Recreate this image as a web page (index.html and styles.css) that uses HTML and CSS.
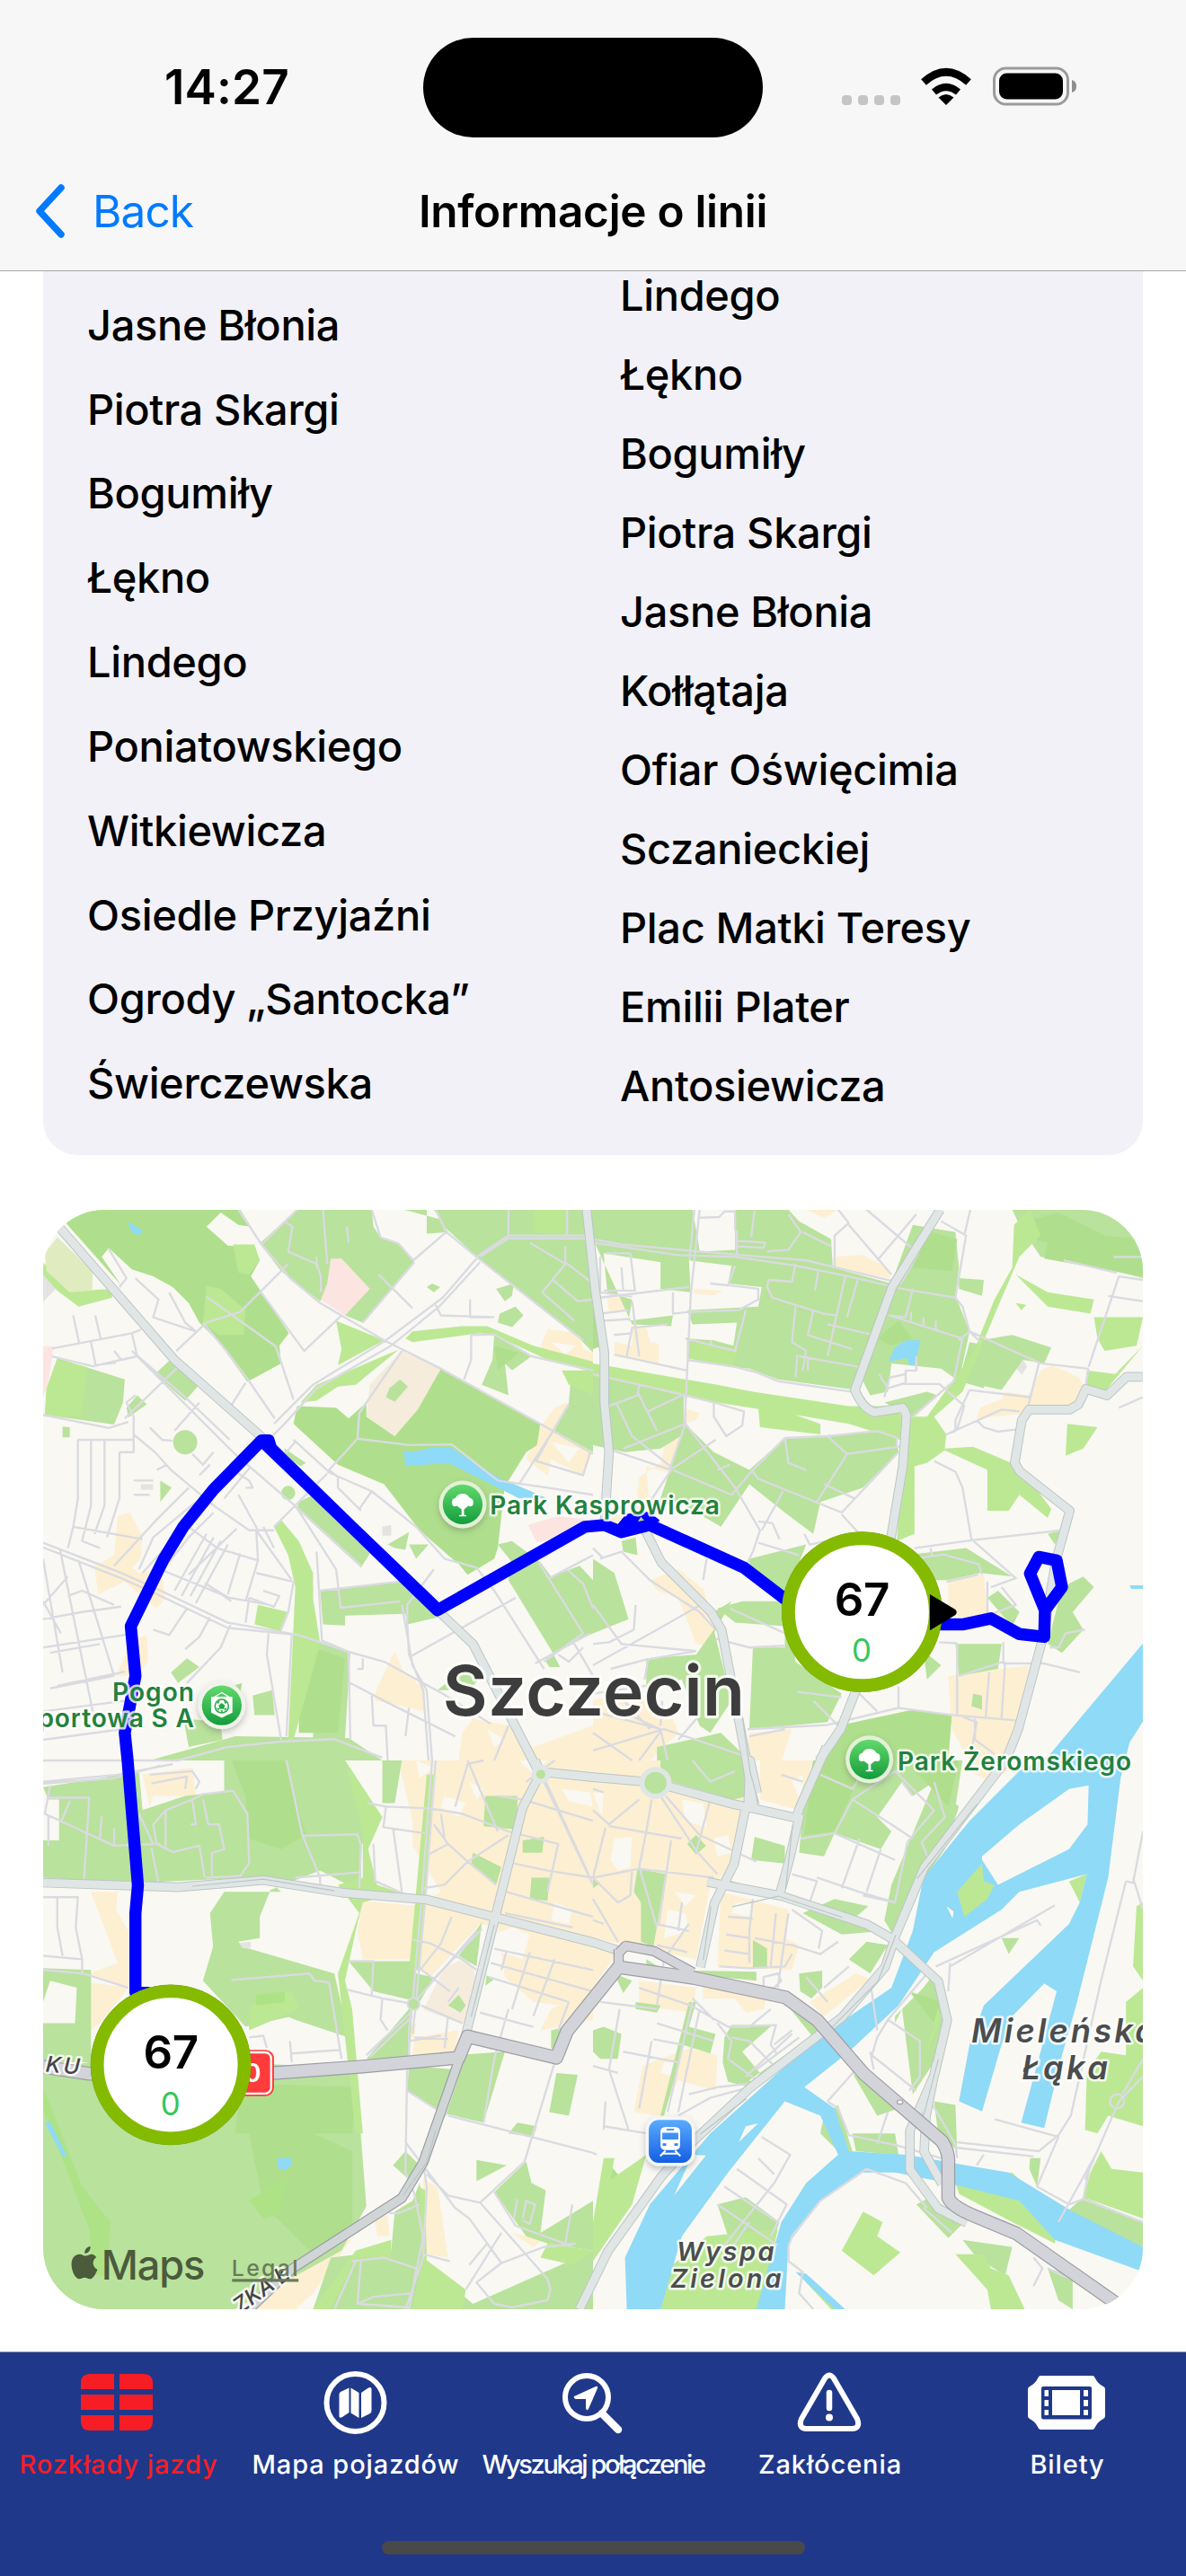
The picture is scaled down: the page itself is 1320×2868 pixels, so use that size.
FILE: index.html
```html
<!DOCTYPE html>
<html lang="pl">
<head>
<meta charset="utf-8">
<title>Informacje o linii</title>
<link rel="stylesheet" href="styles.css">
</head>
<body>
<div class="screen">
<header class="header">
  <div class="status">
    <div class="status-left"><span class="time">14:27</span></div>
    <div class="island"></div>
    <div class="status-right">
      <svg class="status-icons" viewBox="0 0 264 46" width="264" height="46">
        <g fill="#c5c5c6"><rect x="0" y="32" width="11" height="11" rx="4"/><rect x="18" y="32" width="11" height="11" rx="4"/><rect x="36" y="32" width="11" height="11" rx="4"/><rect x="54" y="32" width="11" height="11" rx="4"/></g>
        <path d="M116 43L107.500 34.500Q116 27.500 124.500 34.500Z"/>
        <path d="M102.500 28.500Q116 17.500 129.500 28.500" fill="none" stroke="#000" stroke-width="8"/>
        <path d="M91 17.500Q116-5 141 17.500" fill="none" stroke="#000" stroke-width="8.500"/>
        <rect x="169.500" y="2" width="82" height="40" rx="13" fill="none" stroke="#9b9b9b" stroke-width="3"/>
        <rect x="175" y="7.500" width="71" height="29" rx="8.500"/>
        <path d="M256 15q5 1.500 5 7t-5 7z" fill="#8f8f8f"/>
      </svg>
    </div>
  </div>
  <nav class="navbar">
    <a class="back"><svg viewBox="0 0 36 60" width="36" height="60"><path d="M30 4L6 30L30 56" fill="none" stroke="#007aff" stroke-width="7.500" stroke-linecap="round" stroke-linejoin="round"/></svg><span>Back</span></a>
    <h1 class="title">Informacje o linii</h1>
  </nav>
</header>
<main class="content">
  <section class="stops">
    <ul class="stop-list outbound">
      <li>Jasne Błonia</li><li>Piotra Skargi</li><li>Bogumiły</li><li>Łękno</li><li>Lindego</li><li>Poniatowskiego</li><li>Witkiewicza</li><li>Osiedle Przyjaźni</li><li>Ogrody „Santocka”</li><li>Świerczewska</li>
    </ul>
    <ul class="stop-list inbound">
      <li>Lindego</li><li>Łękno</li><li>Bogumiły</li><li>Piotra Skargi</li><li>Jasne Błonia</li><li>Kołłątaja</li><li>Ofiar Oświęcimia</li><li>Sczanieckiej</li><li>Plac Matki Teresy</li><li>Emilii Plater</li><li>Antosiewicza</li>
    </ul>
  </section>
  <section class="map">
  <svg viewBox="20.2 17.7 3095.500 3095.500" width="1224" height="1224">
    <defs>
      <linearGradient id="poi" x1="0" y1="0" x2="0" y2="1"><stop offset="0" stop-color="#62d96c"/><stop offset="1" stop-color="#139c3c"/></linearGradient>
      <linearGradient id="rail" x1="0" y1="0" x2="0" y2="1"><stop offset="0" stop-color="#5aabff"/><stop offset="1" stop-color="#155ee3"/></linearGradient>
      <filter id="shadow" x="-50%" y="-50%" width="200%" height="200%"><feDropShadow dx="0" dy="8" stdDeviation="10" flood-color="#555" flood-opacity=".35"/></filter>
      <g id="tree"><circle r="67" fill="#e3f1d7" filter="url(#shadow)"/><circle r="56" fill="url(#poi)"/><path fill="#fff" d="M-3 30V14L-16 4Q-30 10-30-6Q-30-16-20-18Q-14-30 0-30Q14-30 20-18Q30-16 30-6Q30 10 16 4L4 14V30H10V34H-10V30Z"/></g>
    </defs>
    <rect width="3140" height="3140" fill="#f9f8f3"/>

    <!-- built-up areas -->
    <g class="town">
      <path d="M230 880L265 870L300 940L295 1000L260 1035L218 1015ZM165 1020L220 990L290 1040L350 1030L365 1110L340 1140L250 1065L175 1100ZM1420 400L1440 355L1535 365L1540 410L1568 420V450L1430 415ZM1460 575L1495 560L1490 620L1568 700L1540 765L1450 720L1440 765L1380 720L1420 630ZM270 1230L312 1215L315 1290L280 1330L225 1330ZM955 1375L1010 1260L1030 1310L1095 1370V1430L1010 1410L955 1400ZM1230 1450L1330 1470L1400 1530L1568 1470V1568H1190L1200 1490Z"/>
      <g transform="translate(1568 0)"><path d="M600 17H690L650 40ZM190 165H270V240L190 235ZM280 240L365 245L340 258L290 255ZM40 265L95 262L98 300L45 305ZM110 345H150L160 390L185 395V450L60 430L60 390L110 400ZM680 150L760 145L835 185V210L675 180ZM760 335L795 355L775 415L755 415ZM1260 470L1290 455L1370 490L1385 530L1350 570L1220 590L1080 605L1090 575L1150 550L1160 530L1225 540ZM255 575L300 590L290 610L255 620ZM210 650L255 620L220 760L150 740L160 870L90 930L30 915L60 880L120 860L130 770L190 730ZM160 1060L240 1030L310 1085L345 1200L340 1250L290 1240L240 1110L180 1090ZM1000 1065L1100 1045L1110 1160L1180 1130L1180 1180L1000 1160ZM1000 1330L1230 1300L1180 1500L1150 1568H1060L1010 1480ZM0 1400L100 1370L220 1440L240 1490L160 1568H0ZM440 1490L560 1480L530 1568H430Z"/></g>
      <g transform="translate(0 1568)"><path d="M300 40L440 20L450 100L330 100L320 130ZM155 370H230L225 420L260 480V640L150 600L230 570ZM155 625L260 640L180 740L155 760ZM920 395L1080 410L1060 560H920L905 480ZM1020 0H1360L1400 40L1440 0H1568V700L1400 680L1320 610L1300 470L1250 460L1110 610L1080 590L1090 400L1140 370L1060 240L1060 170ZM940 830L1070 740L1060 830L1180 820L1190 760L1060 780ZM1450 700L1568 650V730L1420 760ZM1090 1180L1130 1200L1160 1400L1100 1390ZM955 1290L990 1280L995 1340L960 1340ZM620 1480L890 1345L780 1500L730 1545H600ZM1340 1330L1425 1350L1400 1370Z"/></g>
      <g transform="translate(1568 1568)"><path d="M0 0H440L400 300L330 350L290 560L0 500ZM360 370L550 420L540 500L580 520L560 590L350 580ZM130 620L290 640L280 710L130 690ZM310 610L490 660L480 700L430 710L400 670L310 670ZM610 680L740 600L780 615L650 720ZM140 860L270 810L350 830L345 930L240 900L190 1000L115 990ZM470 0H620L580 140L470 110ZM1040 20L1120 60L1180 20V0H1060ZM0 530H75L0 640Z"/></g>
    </g>
    <g class="land-gap"><path d="M1450 390L1520 400L1490 425ZM1450 670L1530 690L1500 730ZM1270 1480L1320 1510L1290 1530Z"/>
      <g transform="translate(0 1568)"><path d="M1150 100L1210 120L1190 160L1140 130ZM1340 470L1390 490L1370 560L1310 540L1290 580L1290 490ZM1460 400L1510 420L1500 460L1450 450ZM1480 80L1560 90L1568 130L1500 115ZM1130 720L1180 740L1170 760L1120 755ZM1070 0L1120 20L1080 50ZM1220 60L1260 80L1240 110Z"/></g>
      <g transform="translate(1568 1568)"><path d="M60 220L110 215L105 300L70 310L50 280ZM250 110L310 120L320 190L260 170ZM340 220L380 210L390 260L350 270ZM0 90L30 90L25 160ZM210 420L260 430L270 480L200 500ZM230 370L290 380L260 410ZM400 400L450 400L440 440L390 430ZM200 850L240 850L230 890L190 880ZM560 60L590 40V130Z"/></g>
    </g>
    <g fill="#fce4e1"><path d="M830 152L855 152L942 240L870 315L800 270L820 225ZM20 402H50L35 500L20 545ZM1385 905L1470 880L1555 890L1500 930L1410 955Z"/></g>
    <path fill="#f6ecde" d="M1030 415L1140 465L1075 580L1010 655L930 600L940 510ZM1215 2122L1240 2180L1205 2310L1090 2270L1150 2150ZM548 2000L565 2005V2055H548ZM1730 1295H1765L1758 1308H1735Z"/>
    <path fill="#e3e4e2" d="M20 195L60 235L20 278ZM2035 310L2075 318L2060 328ZM1985 345L2030 350L2020 365ZM2755 460L2780 440L2790 460L2775 482ZM2640 1245L2675 1248V1285H2645ZM2070 1350L2095 1360L2080 1380ZM545 2085L605 2078V2095L560 2105ZM295 790H330V806H295ZM975 910L1000 905V935H975Z"/>

    <!-- light parkland -->
    <g fill="#b9e29c">
      <path d="M630 112L735 17L945 17L950 65L970 95L1020 110L1065 165L920 335L870 315L940 240L860 155L830 155L820 225L800 275L690 190ZM1035 17H1100V85L1160 80L1140 45ZM1120 17H1568V420L1525 375L1320 215L1240 150L1155 70ZM60 435L250 495L245 560L220 622L25 595L30 520ZM380 438L455 515L420 555L335 480ZM255 575L285 540L312 565L260 602ZM386 672A34 34 0 1 0 454 672A34 34 0 1 0 386 672ZM1100 235L1115 225L1138 235L1120 250ZM1295 240L1345 225L1340 260L1320 275ZM1305 310L1350 290L1372 315L1340 348L1300 335ZM1290 370L1395 430L1340 470L1320 450L1330 540L1255 510L1285 440ZM1500 560L1505 500L1568 460V700L1460 640ZM700 690L760 730L745 740L700 710ZM800 1090L1040 1060L1130 1165L1045 1185L1040 1155L870 1160V1188L808 1185ZM990 960L1050 925L1040 975L1010 970ZM1050 960L1105 960L1070 1000ZM740 840L780 820L940 985L915 1025L735 860ZM1300 960L1340 950L1420 1010L1450 1050L1530 1020L1568 1060V1210L1455 1265L1330 1060L1340 1010ZM1435 1290L1455 1265L1475 1305H1445ZM780 1230L885 1265L870 1505H780ZM380 1320L425 1280L460 1305L400 1350ZM610 1385L665 1370L672 1440L615 1440ZM350 780L382 800L350 840ZM75 628L95 630V658H75ZM690 815A20 20 0 1 1 730 815A20 20 0 1 1 690 815ZM415 1450L520 1460L525 1510L430 1530ZM1180 1330L1280 1300L1220 1370L1130 1370ZM320 1568L560 1500L880 1505L975 1568Z"/>
      <g transform="translate(1568 0)"><path d="M0 17H280L295 100L300 135L400 130V17H550L580 50L670 100L675 180L840 225L820 320L740 525L520 495L440 465L390 460L265 435V380L340 385L395 400L405 335L280 340L265 300L465 290L475 235L380 225L390 175L270 160L275 250L190 240V165L60 145L30 140L40 250L110 270L100 330L225 315L220 345L110 340L0 100ZM840 225L900 60L1020 80L1030 180L1020 260L1060 360L1030 500L980 465L840 450L830 530L780 540L755 490ZM1030 210L1100 215L1095 260L1030 240ZM1180 17H1548V210L1470 190L1260 150L1200 60ZM1090 385L1180 370L1290 405L1270 450L1210 440L1150 525L1040 500ZM1060 390L1110 400L1100 520L1030 500ZM0 480L130 510L255 540V650L190 690L90 700L0 680ZM260 620L340 700L440 750L540 660L850 640L860 700L760 800L640 840L620 930L540 870L440 790L360 910L240 840L180 860ZM440 1000L600 960L540 1110L440 1030ZM0 1000L60 1040L100 1170L0 1210ZM350 1140L420 1120L540 1120L570 1290L700 1380L660 1460L440 1480L450 1250L540 1250L540 1190L400 1180ZM880 990L1050 970L1180 1050L1090 1040L1000 1060L900 1060ZM1320 1080L1380 1050L1410 1080L1350 1150L1380 1200L1320 1265L1280 1240ZM1020 1240L1150 1240L1140 1310L1030 1330ZM1070 1380L1095 1385V1425L1065 1415ZM1110 1110L1140 1090L1200 1150L1180 1190ZM150 1280L290 1270L340 1200L390 1400L330 1490L300 1470L250 1340L150 1370ZM180 1530L360 1490L440 1568H180ZM80 950L120 940L125 990L85 980ZM820 560L940 530L970 540L900 600ZM930 1260L980 1300L940 1340ZM340 1150L390 1120L340 1210ZM1280 930L1320 920L1300 960Z"/></g>
      <g transform="translate(0 1568)"><path d="M20 75L180 50L290 30L300 140L420 100L550 85L600 110V330L270 345L20 330V225H65V110L35 110ZM20 585L155 590V850H20V740L110 740L115 640L40 620L20 680ZM150 850H580L900 870L930 1255L860 1380L560 1545H20V870ZM530 90V0H870L975 160L960 180L915 240V370L800 310L660 365L630 440V500L570 510L600 560L600 630L840 600L860 690L880 780L730 730L470 620L500 540L490 430L530 370H690L650 330H600ZM600 530L840 600L830 700L720 720L590 750L470 620L500 520ZM975 0H1030L1010 120H975ZM1265 100L1355 100V195L1260 185ZM1370 225L1430 215L1425 260L1370 260ZM1230 260L1310 300L1295 350L1225 290ZM1395 330L1445 330L1440 395L1390 390ZM1320 820L1260 1020L1155 995L1190 890L1180 830ZM1050 860L1180 870L1140 990L1045 930ZM1465 880L1525 885L1500 1000L1445 990ZM1330 1050L1355 1020L1410 1030L1400 1060ZM1240 1125L1325 1140L1240 1185ZM1290 1215L1380 1130L1395 1190L1435 1210L1420 1330L1568 1240V1545H1090L1100 1420L1230 1530L1568 1380L1440 1360L1380 1340ZM1005 1140L1040 1100L1075 1135L1050 1180ZM1080 1190L1100 1400L1060 1545H780L830 1400L1000 1380L1010 1270L1060 1240ZM1080 585L1060 700L1050 850L930 840L1050 700ZM880 565H1070V600L1120 610L1080 680L950 650ZM1255 455L1240 580L1190 550ZM1160 690L1190 660L1210 690L1195 710ZM980 820L1040 795L1030 825ZM1268 605L1290 615L1265 635ZM1450 760L1490 750V830L1450 810Z"/></g>
      <g transform="translate(1568 1568)"><path d="M190 0H430L440 100L395 110L220 60L190 30ZM620 0H1040L1020 130L960 60L900 100L870 60L800 160L840 200L810 250L680 205L650 270L580 260L590 150ZM960 60L1030 130L990 250L900 380L850 500L820 450L840 350L890 230ZM125 305L205 320L170 525L135 510V400L115 370ZM455 215L540 240V290L445 280ZM265 235L290 210L318 240L290 265ZM360 330L520 380L530 390L390 360ZM590 430L680 390L775 410L740 440L820 480L700 490ZM450 505L490 530V585H450ZM720 560L770 510L830 520L780 600ZM580 600L645 592V640L615 670L583 650ZM150 560L200 590L460 595V620L150 590ZM60 600L110 620L85 655ZM120 680L190 690L180 710L120 700ZM370 780L390 745L505 745L420 820L470 880L440 920L380 905L365 850ZM270 750L345 770L330 825L250 800ZM270 680H290L200 1000H190ZM0 760L30 750L80 770L70 840L20 840L0 820ZM540 680L650 740L620 780ZM640 760L440 900L460 920L650 780ZM650 1000L690 970L730 1100L700 1110L640 1050ZM730 1050L850 1050L860 1110L740 1100ZM850 720L930 640L960 600L990 700L960 850L900 940L870 700L850 740ZM960 960L1020 970L1025 1100L970 1040ZM350 1250L430 1230L525 1300L500 1370L400 1400ZM910 1250L950 1230L1050 1295L1000 1345ZM1340 1265L1380 1230L1548 1300V1370L1360 1290ZM1230 1120L1260 1120L1250 1200L1228 1150ZM1040 1350L1180 1370L1160 1450L1080 1400ZM1280 1430L1350 1450L1350 1545L1310 1520ZM1150 500H1200L1170 545ZM730 880L860 980L800 1000ZM0 330L20 345L0 360Z"/></g>
    </g>

    <!-- woodland -->
    <g fill="#afdf8c">
      <path d="M80 50L150 17L575 17L605 65L570 60L520 25L480 65L540 118L615 125L630 160L605 205L712 365L685 400L690 450L595 502L515 390L460 335L430 280L385 235L330 205L270 185L205 125L185 150L240 230ZM735 570L845 575L880 605L930 560V600L1010 655L1140 465L1420 620L1410 680L1380 700L1330 780L1320 790L1300 970L1290 1000L1215 1045L1190 1015L1160 990L1080 920L980 790L850 735L725 620ZM1290 400L1360 420L1300 470ZM745 1000L780 1080L775 1220L740 1210ZM520 1370L580 1350L570 1400ZM780 1250L870 1280L850 1490L740 1490V1300Z"/>
      <g transform="translate(1568 0)"><path d="M920 110L950 80L1025 100L1010 190L900 180ZM1215 50L1310 25L1440 90L1548 100V205L1270 155L1280 110L1215 95ZM860 330L900 380L840 400L800 380ZM0 230L25 400L0 410ZM690 1470L900 1425L1010 1440L1000 1568H640Z"/></g>
      <g transform="translate(0 1568)"><path d="M550 0H700L760 210L690 250L600 220L590 100ZM600 1050H780L890 1100V1300L780 1390L640 1250ZM580 910L900 920L890 1050L560 1050Z"/></g>
      <g transform="translate(1568 1568)"><path d="M620 0H770L720 110L680 200L595 210ZM880 0H1030L1000 130ZM890 650L980 680L960 740ZM0 1300L100 1200L40 1130L30 1300ZM230 1460L430 1390L450 1545H330Z"/></g>
    </g>
    <path fill="#f5ecdc" d="M1030 415L1140 465L1075 580L1010 655L930 600L940 510Z"/>
    <path fill="#b9e29c" d="M985 545L995 520L1025 495L1047 515L1010 558Z"/>

    <!-- grass -->
    <g fill="#bce894">
      <path d="M20 165L95 248L210 240L215 265L120 290L60 245L20 200ZM480 230L520 240L590 300L585 370L515 370L470 335ZM555 115H615L630 160L600 200L570 195ZM845 330L980 385L850 455L860 410ZM745 560L790 510L1000 420L1020 412L900 510L850 515L790 555ZM1040 380L1060 360L1200 345L1270 345L1400 400L1568 445V475L1440 440L1300 375L1250 365L1060 390ZM1480 470L1568 470V540L1500 510ZM60 440L145 460L130 600H25L30 520ZM670 910L690 890L740 950L780 1040V1110L800 1240L725 1510H710L730 1080L710 990ZM625 1130L710 1150L690 1205L615 1185ZM1400 17H1495V90L1400 80Z"/>
      <path fill="#e0ebc0" d="M60 95L160 190L158 245L95 250L30 190L25 140Z"/>
      <g transform="translate(1568 0)"><path d="M0 450L260 495L350 510L450 530L720 570L850 570L870 600L880 670L720 620L600 600L350 560L0 485ZM1185 60L1230 17L1260 90L1200 150L1140 290L1040 530L960 600L995 650L990 690L1070 685L1200 740L1290 860L1280 885L1200 820L1170 865H1110V750L990 695L940 730L905 740V930L855 950L880 600L940 600L1070 420L1130 270L1180 180ZM1190 200L1280 250L1410 270L1400 310L1280 290L1230 240ZM1410 320L1548 320L1530 400L1440 415L1420 380ZM1335 620L1420 630L1380 690L1330 710ZM1390 470L1470 480L1548 400L1440 530L1385 520ZM465 575L500 570L640 620L640 650L470 630ZM1190 280L1220 285L1205 300ZM265 390L410 410L390 460L265 435Z"/></g>
      <g transform="translate(0 1568)"><path d="M870 0L975 160L935 250L960 350L1020 370L920 400L900 480L870 620L890 700L920 1050H900L850 600L910 430L850 350L920 330V200ZM600 690L720 650L740 700L600 760ZM900 1380L1000 1350L1000 1400L900 1400L830 1545H780ZM1090 1400L1210 1490L1200 1545H1060ZM1440 1360L1568 1380L1510 1420L1420 1400ZM1100 40H1120L1080 590H1050ZM1080 1200L1095 1210L1100 1400L1085 1400Z"/>
      <path fill="#ade386" d="M20 920L130 1200L210 1300L200 1450L160 1450L150 1320L20 980ZM620 660L700 650L700 680L620 690ZM600 1240L710 1170L680 1280L640 1290Z"/></g>
      <g transform="translate(1568 1568)"><path d="M1025 370L1095 290L1100 340L1130 350L1110 390L1045 440ZM1340 340L1390 320L1370 400ZM1530 410L1548 400V620L1520 580ZM1500 680L1548 640V1030L1450 1000L1420 1050L1385 1040L1390 880L1430 820L1500 830ZM970 700L930 850L980 720ZM700 1380L760 1270L815 1300L800 1340L865 1385L790 1450ZM1020 1390L1100 1390L1120 1430L1170 1450L1215 1545H1120L1110 1490ZM1020 1190L1180 1160L1310 1290L1300 1360L1180 1300L1030 1220ZM0 1300L30 1120H60L50 1180L150 1110L110 1250L0 1410ZM200 1440L320 1340L520 1320L470 1545H190ZM1430 1100L1460 1150L1548 1160V1290L1380 1230L1400 1160ZM560 1400L590 1450L700 1545H670L600 1470Z"/></g>
    </g>

    <!-- water -->
    <g fill="#8fdaf6">
      <path d="M258 50L300 75L290 90L270 80ZM1035 695L1060 700L1110 688L1170 688L1300 770L1440 830H1360L1160 730L1040 740Z"/>
      <g transform="translate(1568 0)"><path d="M832 445L850 405L880 385H922L905 455L890 455L885 435ZM1510 1075H1548V1085H1515Z"/></g>
      <g transform="translate(0 1568)"><path d="M25 1020L40 1018L88 1115L75 1115ZM680 1120H720V1140L700 1155L680 1145Z"/></g>
      <g transform="translate(1568 1568)">
        <path d="M1200 30L1280-10L1548-330V-110L1510-50L1485 50L1450 330L1360 690L1320 830L1270 1035L1205 1020L1260 820L1305 650L1270 628L1180 720L1150 800L1095 988L1030 960L1060 800L1100 690L1340 460L1370 400L1390 320L1200 370L1150 420L960 540L860 690L720 820L595 920L680 980L720 1100L880 1110L1050 1140L1170 1160L1350 1270L1548 1370V1440L1300 1350L1200 1240L1000 1190L850 1160L760 1160L640 1240L550 1360L540 1545H460L530 1300L600 1190L690 1110L640 1000L540 960L380 1160L250 1340L190 1545H95L90 1400L160 1250L330 1050L620 790L840 640L900 480L930 330L1060 170Z"/>
        <path class="land" d="M1395 70L1392 180L1340 250L1140 350L1095 280V270L1200 180L1340 80ZM995 410L1015 425L1012 445ZM410 1075L430 1030L465 1022ZM228 1225L280 1110L318 1112Z"/>
        <path fill="#bce894" d="M1025 370L1095 290L1100 340L1130 350L1110 390L1045 440Z"/>
        <path d="M570 1440L600 1445L710 1545H680L590 1460Z"/>
      </g>
    </g>

    <!-- streets -->
    <g class="street">
      <path d="M45 408L270 365L295 355M105 315L122 395M167 315L182 380M270 365L285 430L560 705L740 860L915 1020M45 430L160 458L285 430L240 440L220 415M155 390L168 455L225 448M395 415L480 335L575 305L710 170M470 335L540 420L600 500L672 605M480 262L675 402L725 552M550 568L590 505M400 460L250 605M460 560L390 640M20 595L205 632L260 615M280 210L345 270L330 320L450 360M375 250L420 335L450 360M545 665L425 550L270 415M205 128L255 210L235 235M570 17L635 115L715 210L800 280L980 385L1140 465L1455 640L1568 705M635 115L735 17M700 50L722 65L710 135L790 170L802 205V250M630 245L755 415L860 315M808 17L820 170M875 65L880 110M790 150V180M945 17L970 95L1020 112L1062 160L1155 80L1240 150L1540 385M1125 17L1155 80M1065 165L920 335M965 200L1060 295M1240 155L1145 265L985 385L780 510L670 620M1250 165L1135 290L1000 400L790 520L700 620L650 670M1250 150L1330 98H1568M1240 150L1330 90H1568M1330 17V95M1495 17V90M1390 110L1490 170L1425 250L1515 330M1490 120V165L1568 225M1455 215L1525 275L1568 270M1222 270V320H1290M1125 285L1140 315L1290 320M1225 370V440L1205 495M1225 370L1290 368L1395 430L1568 470M1030 415L910 590L905 662M905 662L825 750L850 770V800L915 865M905 662L1050 680L1170 678L1300 780L1440 800L1568 820M820 755L945 810L1070 910L1150 1000L1240 1025L1290 1090L1430 1310M945 810L910 860M725 665L830 760M730 670L680 730M1455 640L1360 790M1500 565L1455 640L1408 725L1540 765L1560 700M820 760L670 910M730 850L845 1030L858 1138L1025 1120M790 980L805 1230L880 1262L885 1510M800 1090L1020 1065M118 665H275V600L255 560L280 540M118 665V830L105 910L90 970M155 665V850L130 950L180 970M193 665V850L165 930M235 700V830L200 940M275 650V700H235M275 650L335 700L380 750L500 850L600 920H670M320 630L355 665L385 668M440 705L470 735L500 700M460 765L490 735M340 750L370 735M275 780H330M275 820H320M105 910L300 945M430 800L340 890L220 1020M450 840L330 940L290 1030M475 850L390 940L300 1040M500 870L430 940L350 1040M430 1045L565 915M390 1090L480 930M410 1105L500 940M435 1105L520 950M450 1125L540 960M475 1070L535 1105M430 910L510 970L625 1005M540 1100L575 985M590 1120L625 1005L620 920L720 1060M620 1040L725 1065L710 1150L690 1200M640 910L670 970M570 760L600 780L610 800L590 800M530 830L605 740M570 820L625 920M640 1090L685 1105L670 1135L600 1110M350 1030L545 1110L660 1130M480 1070L550 1120M20 955L240 1040L330 1080L540 1180L740 1215L880 1262L980 1290L1145 1380L1280 1465M20 968L240 1055L330 1095L540 1195L740 1215M20 1170L130 1150L240 1135M20 1250L280 1210M40 1265L180 1240M20 1000L75 1320M68 975L105 1160L160 1430M120 1005L220 1330M20 1120L70 1210M90 1105L130 1090L220 1130M40 1365L220 1330M60 1358L250 1318M20 1430L250 1400M20 1510L240 1480M90 1050L20 1130M330 1200L375 1215L425 1140M550 1180L520 1250L425 1350M490 1165L460 1220L420 1255M655 1205L650 1270L690 1510M720 1210L705 1500M600 1110L590 1180M20 1568L400 1568L540 1530L690 1515L840 1508L975 1560M885 1350L980 1400L1180 1500M920 1280V1310H905M1040 1500L1050 1420M945 1380L950 1470H985L990 1568M1045 1180L1050 1270L1090 1370L1105 1568M1030 1130L1060 1300L1100 1370L1115 1568M1055 1275L1180 1205L1350 1110M1120 1030L1045 1130V1180M1415 1010L1540 1210L1430 1290M1495 1030L1540 1070L1568 1140M1445 1055L1530 1010L1568 990M1470 1270L1500 1290L1540 1250M1405 1295L1560 1210M1510 1230L1568 1330M1330 1470L1290 1568"/>
      <g transform="translate(1568 0)"><path d="M0 100L80 115L300 135L480 150L600 160L870 225M0 110L240 145L400 150L570 175L720 205L870 240L1020 265M300 17L275 260L258 620M285 17L272 160M295 40L355 38L370 22H400V75M405 75V150M20 150V250L110 262M35 140H105L118 245H30M80 180L85 245M20 265L270 235M20 310L100 300M30 330L105 325M58 370L110 365M110 275L130 430M95 430L110 350L210 340M405 105L485 110L480 125L405 120M455 20L445 95M550 30L585 80L550 130L490 135M670 120L590 80M680 180V90L720 55L690 17M720 60L840 200M800 160L910 30M770 17L915 140L870 220M980 50L1050 90L1020 265L1040 290L1060 360L1260 450L1395 465M1062 17L1045 90M400 175L380 230L465 240L465 270L410 300L270 305M570 170L560 220L495 215L490 235L505 265L650 310L690 315M330 225L380 230M635 185L625 245M710 205L660 430M570 290L560 390L600 415L590 470M620 300L605 370L730 410M575 425L570 490M605 430V470M745 215L715 320M580 430L750 460M660 340L790 370M260 380L400 415L430 300M265 440L400 460L460 475L520 500L730 530M60 425L265 470M330 385L335 400M225 250V310L270 305M900 240L880 320L835 315L1040 380L1015 500L900 600M895 305V330M930 320V345M965 330V355M1030 385L1060 360L1090 390M910 430V470H880V505L830 520L805 480M870 508H975L1045 570L1025 635M880 480L835 490L820 545M1060 525L1230 545M1060 525L1020 610V640L995 650L1150 580L1200 585M1080 610L1100 630L1140 642L1200 635M1255 450L1225 570M1395 460L1480 205L1548 215M1395 465L1385 520M1325 160L1475 195M1465 150H1548M1450 260L1548 275M1480 575L1548 545M0 480L130 510L260 540L340 560L425 585L420 625L375 655L340 600V560M130 510L125 540L30 575M65 560L110 655L225 745M125 530L180 640M155 585L250 540M55 695L220 750L140 870M260 540V620L215 750M85 690L260 620L400 800L470 920L450 980L430 1020M225 745L345 665M225 750L390 820L450 750L540 660L660 655L800 640L855 660V680M350 750L385 735M450 755L465 775L700 870L860 700M540 660L550 730L600 750M660 655L715 705L630 840M715 705L870 683M650 790L735 830M535 810L475 920M700 875L840 1030M465 955L580 990M525 945L505 900L465 895M595 930L610 960L660 950M960 725L1020 755L1040 800L1065 945L1190 1055L1120 1080M905 970L1065 948L1320 920M950 970L955 995M905 1000L985 988L1085 1015L1095 1045M1110 1065V1160L1190 1130L1150 1080M995 1065L1085 1045M1025 1240V1440M975 1235L1025 1238M1155 1235V1295H1270L1370 1320M1030 1330L1155 1290M1115 1320L1105 1450M1160 1290L1150 1450M1010 1440L1190 1455M1040 1445L1080 1460L1060 1568M1075 1450V1510L1130 1550M20 1000L80 980L160 1060L300 1150L345 1200M0 1240L45 1235L115 1200L120 1130M0 1300L180 1200L320 1120M0 1130L80 1240L290 1260M385 1140L540 1210L610 1280M345 1225L440 1250L540 1245M50 1310L145 1285L290 1260M155 1285L145 1340M0 1380L200 1350M60 1370L160 1480M575 1375L700 1390M435 1480L660 1468L860 1420L1010 1440M440 1500L540 1480M620 1400L700 1480M860 1360V1420M740 1370L800 1430M0 1430L190 1480L210 1568M0 1490L110 1568M195 1480L130 1568M0 1540L200 1480L440 1560M240 1510L300 1440M320 1000L310 1060M0 970L30 1000M1285 1250L1310 1250L1330 1210L1385 1200M55 1420L190 1480M195 1400L190 1470"/></g>
      <g transform="translate(0 1568)"><path d="M20 60L230 40L385 10M20 65L220 50L350 15M40 70L25 150L220 240L350 235M35 105H150L135 340M95 115L70 175M185 155L180 225M220 190V240M35 155V240M440 110L365 140L330 180L340 235L385 258L460 240L475 330M440 110L470 95L555 85L595 150L600 290L575 325L480 330M365 140V250M470 110L485 180H515L530 250L495 260V325M440 110L450 180H435M290 150L330 235M325 245L345 345M320 40L440 30L460 60L450 80M325 65L425 45L420 80M705 0L750 210L800 330M750 212L905 208L915 240L910 360M730 330L910 315M800 365V325M20 385H118L112 470L130 560V600M60 385V470L75 550M20 550L130 560M20 590L135 600L260 640M550 618L770 600L785 620L825 625L860 840M715 790L720 850M720 825L855 815M600 780L640 775L650 810M880 565H950L945 660M875 645L975 670L1060 685M975 670L970 730L990 760M933 120L985 130L978 188L1095 205M1005 190L1030 370M985 130L1110 135L1200 150L1330 200L1470 235L1440 370M950 235L955 340L1090 400M1115 0L1085 400L1060 680L1050 760V830M1125 0L1095 400L1070 680L1060 770M1050 790L1140 775M1160 235L1215 285L1295 350M1105 265L1160 235L1120 180M1215 285L1330 210M1215 285L1150 350L1090 360M1180 130L1215 10L1260 0M1140 150L1150 220M1300 100L1370 110L1568 170M1380 60L1460 0M1430 60L1568 350M1435 60L1555 320M1300 200L1215 0M1345 290L1440 310L1568 330M1325 370L1568 440M1320 430L1510 470M1290 530L1568 590M1325 535L1310 590M1275 610L1500 680M1280 570L1568 650M1390 540L1340 700M1460 560L1400 720M1500 680L1470 760M1060 505L1110 515L1200 560L1240 590M1085 585L1140 515L1170 440M1120 615L1255 475M1075 670L1240 480M930 830L1055 710M940 835L1060 720M1080 585L1165 650M1085 690L1200 740M1160 680L1190 640M1160 720L1150 810M1065 780L1160 785M1045 860L1040 1160L1065 1220L1090 1340L1050 1545M1085 1100L1100 1200L1090 1400L1040 1545M1250 710L1400 750M1330 700L1290 840L1260 1020M1160 1000L1395 1060L1568 1105M1460 850L1375 1130L1250 1245L1160 1225L1100 1165M1040 1075L1180 1260L1220 1290L1310 1415L1240 1470L1290 1530L1340 1540L1440 1520L1448 1490L1440 1460L1250 1245M1090 1390L1165 1410M1220 1420L1270 1360L1310 1415L1430 1370L1520 1360M1310 1330L1210 1490M1345 1290L1355 1235M1370 1290L1380 1240L1405 1250L1390 1305L1370 1295M1490 1360L1510 1250M890 1410L980 1400L1070 1430L1060 1500L950 1510L905 1530M915 1405L905 1530L1050 1540M900 1410L840 1545M1045 930L1155 1000M1290 1215L1350 1310L1510 1368M995 1275H1020L1080 1250"/></g>
      <g transform="translate(1568 1568)"><path d="M0 140L45 180L130 110M45 185L250 220M0 330L130 305L340 330M35 190L0 330L70 400L105 380L110 310M150 200L130 300L180 470M165 110L150 200M220 225L185 460M190 100L295 260L350 320M205 100L300 210L460 285M290 260L330 110M0 390L70 510M0 450L30 460M175 460L270 480M200 560L270 460M180 520L265 540M250 400L240 480M450 390L440 480V570M380 440L450 445M375 490L440 500M370 535L440 545M515 430L500 580M550 430L520 640M455 500L560 520L640 545L690 510M560 420L645 480L635 530M355 580L440 585L540 580L560 545M340 640L460 660M600 610L660 680M650 640L720 580M200 560L180 690M130 640L275 690L380 750H440L500 700M280 670L340 730M20 680L180 700M75 700L45 870L100 1040M180 740L340 790M85 820L240 850M165 790L130 980M170 785L250 800M0 860L70 880M300 700L240 990M280 680L210 990M350 740L390 790L380 840L460 900M390 780L440 790L510 860M380 750L515 745L500 800L520 830M510 800L560 760M430 890L560 770M460 870L580 780M270 940L350 920L440 910M240 1000L330 950L440 920M30 1030L150 1050M35 960L30 1040M0 1105L10 1110M585 220L680 205L730 110L850 30L960 140L885 230L850 400L760 380M730 110L840 180L900 220M680 205L850 280M640 40L730 80L770 20M750 220L700 360M810 250L770 370M630 330L750 370L850 400M560 320L630 340L610 400M900 100L870 60M960 60L990 160L925 230L945 280M660 960L740 870M660 960L690 980L720 1055L860 1085L980 1120M830 990L800 1080M830 730L920 790V890L890 930M830 730L800 780L785 830L910 930M790 870L780 820M940 600L830 730M1005 580L1300 408M965 580L1250 450L1260 465M1005 570L1000 650M550 1370L560 1340L640 1240L770 1150L880 1190L940 1260M550 1370V1410L590 1440L580 1500L620 1545M475 1060L555 1110L510 1190L350 1390M510 1165L465 1120M405 1150L545 1250L500 1340M370 1200L520 1300M350 1250L520 1365M385 1380L440 1300M1130 1010L1310 1060L1250 1200L1340 1250M1025 1075L1255 1100L1310 1055L1345 1000L1430 620L1500 340M1020 1090L1240 1115M1080 1140L1100 1110M1310 1300L1420 1100M1385 1180L1480 960L1548 890M1500 340L1520 345L1548 200M1520 330L1548 420M1455 960A18 18 0 1 1 1495 960A18 18 0 1 1 1455 960M1490 940L1548 840M1340 1250L1380 1235L1548 1300V1300M1395 1160L1380 1235M1280 1430L1320 1450L1400 1480M1240 1480L1265 1430L1240 1400M950 960L1020 1080L1025 1120M800 760L780 620M480 610L520 600L530 620L510 640H480ZM1010 1330L930 1260M530 40L590 60M0 80L30 90M400 30L330 60L280 0"/></g>
    </g>

    <!-- main roads -->
    <g class="roads">
      <path d="M60 60L390 440L650 670L1130 1145L1230 1240L1410 1590M1550 17L1575 250L1600 420V560L1613 700L1600 905M2545 17L2410 235L2305 525Q2325 575 2360 588L2440 575Q2450 590 2450 600L2440 740L2405 950L2340 1290L2265 1480L2205 1568M1710 910L1760 1010L1900 1150L1930 1200L2000 1568L2020 1700M3115 488H3070L3015 540L2955 522L2935 565L2910 580H2795L2775 610L2755 730L2770 755L2910 865L2870 1010L2835 1220L2765 1480L2730 1568L2500 1870L2420 2060L2390 2150L2270 2290L2010 2490L1850 2640L1760 2740L1610 2950L1530 3113"/>
      <path d="M20 1912L400 1925L640 1905L860 1940L1100 1960L1568 2080L1645 2105M1425 1595L1370 1700L1290 2020L1210 2340M1405 1568L1420 1600L1568 1615L1740 1630L1960 1690L2140 1730L2150 1700L2225 1530M2000 1690L1965 1860L1910 1970L1870 2150M2150 1720L2120 1850L2095 1940M1890 1910L2100 1950L2340 2030L2410 2070L2540 2190L2565 2300L2530 2450L2460 2610V2720L2540 2830L2620 2870M2535 2420L2505 2570L2500 2670L2550 2760M2005 1690L2010 1568L2030 1660"/>
    </g>
    <g class="roads-core">
      <path d="M60 60L390 440L650 670L1130 1145L1230 1240L1410 1590M1550 17L1575 250L1600 420V560L1613 700L1600 905M2545 17L2410 235L2305 525Q2325 575 2360 588L2440 575Q2450 590 2450 600L2440 740L2405 950L2340 1290L2265 1480L2205 1568M1710 910L1760 1010L1900 1150L1930 1200L2000 1568L2020 1700M3115 488H3070L3015 540L2955 522L2935 565L2910 580H2795L2775 610L2755 730L2770 755L2910 865L2870 1010L2835 1220L2765 1480L2730 1568L2500 1870L2420 2060L2390 2150L2270 2290L2010 2490L1850 2640L1760 2740L1610 2950L1530 3113"/>
      <path d="M20 1912L400 1925L640 1905L860 1940L1100 1960L1568 2080L1645 2105M1425 1595L1370 1700L1290 2020L1210 2340M1405 1568L1420 1600L1568 1615L1740 1630L1960 1690L2140 1730L2150 1700L2225 1530M2000 1690L1965 1860L1910 1970L1870 2150M2150 1720L2120 1850L2095 1940M1890 1910L2100 1950L2340 2030L2410 2070L2540 2190L2565 2300L2530 2450L2460 2610V2720L2540 2830L2620 2870M2535 2420L2505 2570L2500 2670L2550 2760M2005 1690L2010 1568L2030 1660"/>
    </g>
    <path class="road-split" d="M440 1922L640 1902L840 1935M1290 2030L1225 2290M2130 1750L2110 1930M1960 1980L2090 1950L2270 2010M1900 1980L1878 2130M2480 1900L2650 1690M2420 2060L2370 2190L2240 2320M1870 2620L2000 2520M2540 2410L2490 2600M1985 1420L2010 1600L2035 1690"/>
    <g class="roundabout"><circle cx="1744" cy="1631" r="38"/><circle cx="1421" cy="1607" r="20"/><circle cx="1063" cy="2254" r="17" class="thin"/></g>

    <!-- expressways -->
    <g class="express-edge"><path d="M20 2430L150 2450L670 2448L920 2430L1190 2405L1215 2345L1465 2405L1495 2330L1640 2150L1850 2180L2110 2235L2200 2300L2330 2450L2550 2640Q2570 2670 2568 2700V2800Q2580 2825 2640 2850L2760 2900L3060 3110"/><path class="narrow" d="M1640 2110L1660 2090L1740 2105L1850 2165M1640 2100V2160M1195 2400L1090 2700L1030 2800L720 3000L600 3113"/></g>
    <g class="express"><path d="M20 2430L150 2450L670 2448L920 2430L1190 2405L1215 2345L1465 2405L1495 2330L1640 2150L1850 2180L2110 2235L2200 2300L2330 2450L2550 2640Q2570 2670 2568 2700V2800Q2580 2825 2640 2850L2760 2900L3060 3110"/><path class="narrow" d="M1640 2110L1660 2090L1740 2105L1850 2165M1640 2100V2160"/><path class="narrow grey" d="M1195 2400L1090 2700L1030 2800L720 3000L600 3113"/></g>
    <path class="road-split" d="M1125 2610L1100 2700L1035 2790"/><ellipse cx="2432" cy="2530" rx="8" ry="6" fill="#f9f8f3" stroke="#a2a2a8" stroke-width="3"/>

    <!-- line 67 -->
    <path class="route" d="M320 2222H280V1998L287 1920L258 1568L250 1490L280 1330L267 1190L360 1000L415 910L500 805L635 667H655L662 690L1130 1145L1545 910L1600 905L1648 925L1728 905L1993 1025L2130 1130M2540 1185H2608L2688 1168L2768 1212L2838 1220L2840 1145L2798 1042L2823 995L2873 1005L2888 1080L2840 1145M1128 1140L640 672"/>
    <path class="route" d="M1650 915L1670 890L1720 885L1745 905"/>
    <path fill="#bcd68e" d="M1694 895L1703 882L1712 892Z"/>

    <!-- place names -->
    <g class="label green"><text x="1278" y="875" textLength="646">Park Kasprowicza</text><text x="2425" y="1595" textLength="658">Park Żeromskiego</text><text x="215" y="1400" textLength="230">Pogon</text><text x="-42" y="1475" textLength="487">Sportowa S A</text></g>
    <text class="label city" x="1145" y="1441" textLength="850">Szczecin</text>
    <g class="label district"><text x="2633" y="2363" textLength="518" class="big">Mieleńska</text><text x="2775" y="2465" textLength="242" class="big">Łąka</text><text x="1803" y="2976" textLength="275">Wyspa</text><text x="1786" y="3052" textLength="312">Zielona</text></g>
    <g class="label road-name"><text transform="translate(26 2444) rotate(5)" textLength="96">KU</text><text transform="translate(574 3128) rotate(-36)" textLength="178">ZKA Ł</text></g>
    <use href="#tree" x="1201" y="847"/><use href="#tree" x="2346" y="1565"/>
    <g transform="translate(523 1413)"><circle r="67" fill="#f0f3eb" filter="url(#shadow)"/><circle r="56" fill="url(#poi)"/><path d="M0-36L-22-23H22Z" fill="none" stroke="#fff" stroke-width="3"/><path d="M-30-24H30V20L0 35L-30 20Z" fill="#fff"/><circle cy="2" r="21" fill="#24a947"/><g fill="#fff"><circle cy="2" r="17"/><path fill="#24a947" d="M0-7L9 0L6 10H-6L-9 0ZM-14-8L-5-15L-10-3ZM14-8L5-15L10-3ZM-15 7L-8 16L-7 8ZM15 7L8 16L7 8ZM-4 14H4L0 20Z"/></g></g>
    <g transform="translate(1725 2580)"><rect width="121" height="121" rx="28" fill="url(#rail)" stroke="#f3f7f7" stroke-width="18" paint-order="stroke" filter="url(#shadow)"/><path fill="#fff" fill-rule="evenodd" d="M48 20H73Q88 21 88 32V72Q88 82 77 85H44Q33 82 33 72V32Q33 21 48 20ZM50 25V30H71V25ZM38 36V55H83V36ZM39 66V73H49V66ZM72 66V73H82V66Z"/><path d="M47 87L32 102M74 87L89 102M40 95H82" stroke="#fff" stroke-width="5" fill="none"/></g>
    <g><rect x="540" y="2383" width="130" height="130" rx="24" fill="#ff3b3b"/><rect x="545" y="2390" width="117" height="116" rx="17" fill="none" stroke="#fff" stroke-width="6"/><text class="shield" x="586" y="2473">0</text></g>

    <!-- vehicles -->
    <g class="vehicle" transform="translate(2325 1150)"><circle class="rim" r="226"/><circle class="ring" r="207"/><text class="line" y="10">67</text><text class="delay" x="-1" y="141">0</text></g>
    <path d="M2516 1100L2588 1143Q2595 1151 2588 1158L2516 1202Z"/>
    <g class="vehicle" transform="translate(379.500 2425)"><circle class="rim" r="226"/><circle class="ring" r="207"/><text class="line" y="10">67</text><text class="delay" x="-1" y="141">0</text></g>

    <!-- attribution -->
    <g class="credit"><path transform="translate(100 2936)" d="M48 25C56 20 65 23 70 31C57 39 58 58 73 65C69 76 61 92 52 92C46 92 43 88 37 88C31 88 28 92 22 92C11 92 0 70 0 50C0 31 12 22 23 22C30 22 35 27 39 27C42 27 46 26 48 25ZM37 20C36 9 45 1 53 0C55 10 46 21 37 20Z"/><text class="maps" x="184" y="3031" textLength="292">Maps</text><text class="legal" x="551" y="3020" textLength="186">Legal</text><path class="underline" d="M552 3028H739V3036H552Z"/></g>
  </svg>
  </section>
</main>
<footer class="tabbar">
  <nav class="tabs">
    <a class="tab active"><svg viewBox="2 0 88 72" width="88" height="72"><path fill="currentColor" d="M4 22V15Q4 5 14 5H41V22ZM47 5H74Q84 5 84 15V22H47ZM4 28H41V45H4ZM47 28H84V45H47ZM4 51H41V68H14Q4 68 4 58ZM47 51H84V58Q84 68 74 68H47Z"/></svg><span class="t1">Rozkłady jazdy</span></a>
    <a class="tab"><svg viewBox="0 0 88 72" width="88" height="72"><circle cx="43.500" cy="37" r="32" fill="none" stroke="currentColor" stroke-width="6"/><path fill="currentColor" d="M25.500 28Q25.500 26 27 25L36.500 20.500V48L29 53Q25.500 55 25.500 52ZM38.500 20.500L47.500 26V54L38.500 48.500ZM50 26L58 20.500Q61.500 19 61.500 22V46Q61.500 48 60 49L50 54Z"/></svg><span class="t2">Mapa pojazdów</span></a>
    <a class="tab"><svg viewBox="0 0 88 72" width="88" height="72"><circle cx="37" cy="31" r="24" fill="none" stroke="currentColor" stroke-width="6"/><path d="M54 49L72 67" stroke="currentColor" stroke-width="8.500" stroke-linecap="round"/><path fill="currentColor" d="M23 30L47 19Q50 18 49 21L39 44Q37 47 36 43V33H25Q22 32 23 30Z"/></svg><span class="t3">Wyszukaj połączenie</span></a>
    <a class="tab"><svg viewBox="0 0 88 72" width="88" height="72"><path d="M38 10Q43 3 48 10L74 55Q78 65 69 66H17Q8 65 12 55Z" fill="none" stroke="currentColor" stroke-width="6" stroke-linejoin="round"/><path d="M43 26V43" stroke="currentColor" stroke-width="6.500" stroke-linecap="round"/><circle cx="43" cy="53.500" r="4"/></svg><span class="t4">Zakłócenia</span></a>
    <a class="tab"><svg viewBox="0 0 88 72" width="88" height="72"><path fill="currentColor" fill-rule="evenodd" d="M14 7H72Q74 7 75 10Q78 16 84 19Q86 20 86 22V52Q86 54 84 55Q78 58 75 64Q74 67 72 67H14Q12 67 11 64Q8 58 2 55Q0 54 0 52V22Q0 20 2 19Q8 16 11 10Q12 7 14 7ZM17 19Q15 19 15 21V53Q15 55.500 17 55.500H69Q71 55.500 71 53V21Q71 19 69 19Z"/><path fill="currentColor" d="M27 23H58V51H27ZM18.500 23H23V30H18.500ZM18.500 34H23V41H18.500ZM18.500 45H23V51H18.500ZM62 23H67V30H62ZM62 34H67V41H62ZM62 45H67V51H62Z"/></svg><span class="t5">Bilety</span></a>
  </nav>
  <div class="home-indicator"></div>
</footer>
</div>
</body>
</html>
```
FILE: styles.css
```css
* { box-sizing: border-box; }
body { margin: 0; background: #fff; color: #000; font-family: Inter, "Liberation Sans", sans-serif; }
.screen { width: 1320px; height: 2868px; display: flex; flex-direction: column; overflow: hidden; }
.header { height: 302px; flex: none; background: #f7f7f7; border-bottom: 1px solid #a5a5a6; }
.status { height: 194px; display: grid; grid-template-columns: 471px 378px 471px; align-items: center; }
.island { height: 111px; border-radius: 56px; background: #000; }
.status-left { padding-left: 34px; text-align: center; }
.status-right { padding: 0 0 0 88px; }
.time { font-size: 53px; font-weight: 600; letter-spacing: 0.2px; }
.status-icons { display: block; }
.navbar { height: 82px; display: grid; grid-template-columns: 400px 520px 400px; align-items: center; }
.back { display: flex; align-items: center; gap: 29px; padding-left: 38px; color: #007aff; font-size: 49.5px; letter-spacing: -0.9px; }
.title { margin: 0; text-align: center; font-size: 49.5px; font-weight: 600; letter-spacing: -0.3px; }
.content { height: 2316px; flex: none; padding: 0 48px; }
.stops { height: 984px; padding: 0 0 33px 49px; display: grid; grid-template-columns: 593px 1fr; grid-template-rows: 100%; align-items: end; background: #f2f1f7; border-radius: 0 0 38px 38px; overflow: hidden; }
.stop-list { list-style: none; margin: 0; padding: 0; font-size: 47px; font-weight: 500; letter-spacing: -0.35px; white-space: nowrap; }
.outbound { line-height: 93.83px; }
.inbound { line-height: 88px; }
.map { width: 1224px; height: 1224px; margin-top: 61px; border-radius: 68px; overflow: hidden; }
.map svg { display: block; }
.town { fill: #fdefd1; }
.land-gap, .land { fill: #f9f8f3; }
.street { fill: none; stroke: #dadbe1; stroke-width: 6; stroke-linejoin: round; }
.roads, .roads-core { fill: none; stroke: #bcc5c5; stroke-width: 27; stroke-linejoin: round; }
.roads-core { stroke: #e0e6e6; stroke-width: 22; }
.road-split { fill: none; stroke: #bcc5c5; stroke-width: 3; }
.roundabout { fill: #b9e29c; stroke: #e0e6e6; stroke-width: 14; }
.roundabout .thin { stroke: #dadbe1; stroke-width: 5; }
.express-edge, .express { fill: none; stroke: #9c9ca4; stroke-width: 39; stroke-linejoin: round; }
.express { stroke: #d3d3da; stroke-width: 33; }
.express-edge .narrow { stroke-width: 29; }
.express .narrow { stroke-width: 23; }
.express .grey { stroke: #d0d6d6; }
.route { fill: none; stroke: #0000ff; stroke-width: 34; stroke-linejoin: round; }
.label { font-weight: 600; paint-order: stroke; stroke: rgba(255, 255, 255, .82); stroke-width: 13px; stroke-linejoin: round; }
.green { font-size: 71px; fill: #23813d; }
.city { font-size: 194px; fill: #3d3d3d; stroke-width: 16px; }
.district { font-size: 73px; font-style: italic; fill: #4b4d4e; }
.district .big { font-size: 92px; }
.road-name { font-size: 62px; font-weight: 500; font-style: italic; fill: #444; }
.shield { font-size: 72px; font-weight: 600; fill: #fff; }
.rim { fill: #6c9700; }
.ring { fill: #fff; stroke: #84bb00; stroke-width: 37; }
.line { font-size: 129px; font-weight: 600; text-anchor: middle; letter-spacing: -1px; }
.delay { font-size: 88px; fill: #34c759; text-anchor: middle; }
.credit { fill: #4b5b3c; }
.maps { font-size: 114px; font-weight: 500; }
.legal { font-size: 63px; font-weight: 500; fill: #697b5b; }
.underline { fill: #697b5b; }
.tabbar { height: 250px; flex: none; background: #1f388a; border-top: 1px solid #9a9fae; display: flex; flex-direction: column; align-items: center; }
.tabs { width: 1320px; height: 210px; display: grid; grid-template-columns: repeat(5, 264px); }
.tab { display: flex; flex-direction: column; align-items: center; padding-top: 19px; color: #fff; fill: #fff; }
.tab span { margin-top: 12px; font-size: 29px; line-height: 44px; font-weight: 500; letter-spacing: 0.9px; white-space: nowrap; }
.tab.active { color: #f71d25; }
.tab .t3 { letter-spacing: -2.4px; }
.home-indicator { width: 471px; height: 15px; border-radius: 8px; background: #494949; }
```
